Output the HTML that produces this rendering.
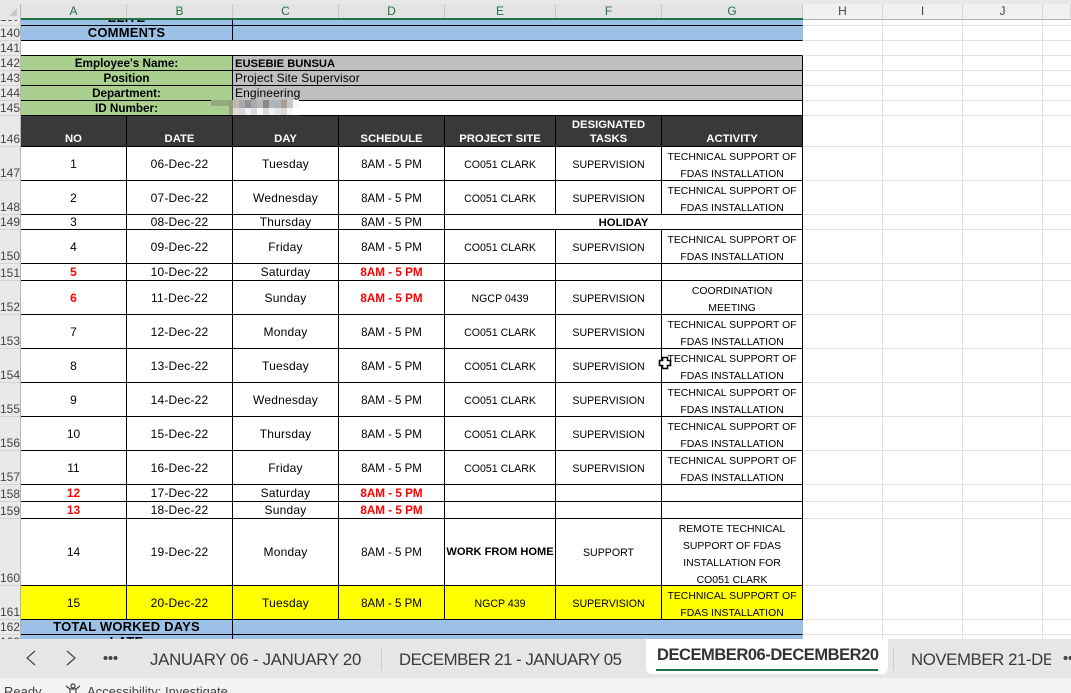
<!DOCTYPE html>
<html><head><meta charset="utf-8"><style>
html,body{margin:0;padding:0;width:1071px;height:693px;overflow:hidden;background:#fff}
body{position:relative;font-family:"Liberation Sans",sans-serif;color:#000}
table{position:absolute;left:0;top:19px;border-collapse:separate;border-spacing:0;table-layout:fixed;width:1110px}
td{padding:0;border-right:1px solid #000;border-bottom:1px solid #000;text-align:center;vertical-align:middle;font-size:12px;line-height:14px;white-space:nowrap}
td:nth-child(3),td:nth-child(4){letter-spacing:.2px}
td:nth-child(5){font-size:11.5px;line-height:12px;padding-top:2px}
td.red:nth-child(5){font-size:11.7px}
td.r{background:#e9e9e9;border-right:1px solid #b5b5b5;border-bottom:1px solid #d4d4d4;text-align:right;padding-right:3px;box-sizing:border-box;vertical-align:bottom;font-size:12px;color:#444;line-height:13px;overflow:hidden;letter-spacing:0}
td.g{border-right:1px solid #e0e0e0;border-bottom:1px solid #e0e0e0}
td.nr{border-right:1px solid transparent}
td.c{font-size:10.6px;line-height:12px;padding-top:2px;letter-spacing:0}
td.hol{font-size:11.3px;font-weight:bold;line-height:12px;padding-top:2px;letter-spacing:0}
td.wfh{font-size:11.1px;font-weight:bold;letter-spacing:0;line-height:14px;padding-top:0}
.a{font-size:10.45px;line-height:17px;margin:-2px 0 -1px;position:relative;top:3px}
.red{color:#f00;font-weight:bold}
td.blue{background:#9bc2e6;font-weight:bold;font-size:13px;letter-spacing:.2px}
td.blue.nr{border-right:1px solid #9bc2e6}
td.grn{background:#a9d08e;font-weight:bold;font-size:11.7px;letter-spacing:0;line-height:12px;padding-top:2px}
td.gry{background:#bfbfbf;text-align:left;padding-left:2px;letter-spacing:.12px}
td.eu{font-weight:bold;font-size:11.2px;letter-spacing:0;line-height:12px;padding-top:2px}
.hd td{background:#3a3838;color:#fff;font-weight:bold;vertical-align:bottom;line-height:14px;font-size:11.3px;letter-spacing:0;padding-top:0}
.y td{background:#ff0}
.y td.r{background:#e9e9e9}
.y td.g{background:#fff}
.abs{position:absolute}
.ch{position:absolute;top:4px;height:14px;line-height:15px;text-align:center;font-size:12px;color:#217346;background:#e3e3e3;border-right:1px solid #c8c8c8;box-sizing:border-box}
.ch.n{background:#f0f0f0;color:#444;border-right:1px solid #d6d6d6}
.tab{position:absolute;top:649px;font-size:16.8px;line-height:22px;color:#3a3a3a;white-space:nowrap}
</style></head><body>
<table>
<colgroup><col style="width:21px"><col style="width:106px"><col style="width:106px"><col style="width:106px"><col style="width:106px"><col style="width:111px"><col style="width:106px"><col style="width:141px"><col style="width:80px"><col style="width:80px"><col style="width:80px"><col style="width:67px"></colgroup>
<tr style="height:7px"><td class="r"><div style="height:6px;overflow:hidden"><div style="margin-top:-8px">139</div></div></td><td class="blue" colspan="2"><div style="height:6px;overflow:hidden"><div style="margin-top:-8px">ELITE</div></div></td><td class="blue nr" colspan="5"></td><td class="g"></td><td class="g"></td><td class="g"></td><td class="g"></td></tr>
<tr style="height:15px"><td class="r">140</td><td class="blue" colspan="2">COMMENTS</td><td class="blue nr" colspan="5"></td><td class="g"></td><td class="g"></td><td class="g"></td><td class="g"></td></tr>
<tr style="height:15px"><td class="r">141</td><td class="nr" colspan="7"></td><td class="g"></td><td class="g"></td><td class="g"></td><td class="g"></td></tr>
<tr style="height:15px"><td class="r">142</td><td class="grn" colspan="2">Employee's Name:</td><td class="gry eu" colspan="5">EUSEBIE BUNSUA</td><td class="g"></td><td class="g"></td><td class="g"></td><td class="g"></td></tr>
<tr style="height:15px"><td class="r">143</td><td class="grn" colspan="2">Position</td><td class="gry" colspan="5">Project Site Supervisor</td><td class="g"></td><td class="g"></td><td class="g"></td><td class="g"></td></tr>
<tr style="height:15px"><td class="r">144</td><td class="grn" colspan="2">Department:</td><td class="gry" colspan="5">Engineering</td><td class="g"></td><td class="g"></td><td class="g"></td><td class="g"></td></tr>
<tr style="height:15px"><td class="r">145</td><td class="grn" colspan="2">ID Number:</td><td colspan="5"></td><td class="g"></td><td class="g"></td><td class="g"></td><td class="g"></td></tr>
<tr style="height:31px" class="hd"><td class="r" style="background:#e9e9e9;color:#444;font-weight:normal;line-height:13px;font-size:12px">146</td><td>NO</td><td>DATE</td><td>DAY</td><td>SCHEDULE</td><td>PROJECT SITE</td><td>DESIGNATED<br>TASKS</td><td>ACTIVITY</td><td class="g" style="background:#fff"></td><td class="g" style="background:#fff"></td><td class="g" style="background:#fff"></td><td class="g" style="background:#fff"></td></tr>
<tr style="height:34px"><td class="r">147</td><td>1</td><td>06-Dec-22</td><td>Tuesday</td><td>8AM - 5 PM</td><td class="c">CO051 CLARK</td><td class="c">SUPERVISION</td><td><div class="a">TECHNICAL SUPPORT OF<br>FDAS INSTALLATION</div></td><td class="g"></td><td class="g"></td><td class="g"></td><td class="g"></td></tr>
<tr style="height:34px"><td class="r">148</td><td>2</td><td>07-Dec-22</td><td>Wednesday</td><td>8AM - 5 PM</td><td class="c">CO051 CLARK</td><td class="c">SUPERVISION</td><td><div class="a">TECHNICAL SUPPORT OF<br>FDAS INSTALLATION</div></td><td class="g"></td><td class="g"></td><td class="g"></td><td class="g"></td></tr>
<tr style="height:15px"><td class="r">149</td><td>3</td><td>08-Dec-22</td><td>Thursday</td><td>8AM - 5 PM</td><td colspan="3" class="hol">HOLIDAY</td><td class="g"></td><td class="g"></td><td class="g"></td><td class="g"></td></tr>
<tr style="height:34px"><td class="r">150</td><td>4</td><td>09-Dec-22</td><td>Friday</td><td>8AM - 5 PM</td><td class="c">CO051 CLARK</td><td class="c">SUPERVISION</td><td><div class="a">TECHNICAL SUPPORT OF<br>FDAS INSTALLATION</div></td><td class="g"></td><td class="g"></td><td class="g"></td><td class="g"></td></tr>
<tr style="height:17px"><td class="r">151</td><td class="red">5</td><td>10-Dec-22</td><td>Saturday</td><td class="red">8AM - 5 PM</td><td></td><td></td><td></td><td class="g"></td><td class="g"></td><td class="g"></td><td class="g"></td></tr>
<tr style="height:34px"><td class="r">152</td><td class="red">6</td><td>11-Dec-22</td><td>Sunday</td><td class="red">8AM - 5 PM</td><td class="c">NGCP 0439</td><td class="c">SUPERVISION</td><td><div class="a">COORDINATION<br>MEETING</div></td><td class="g"></td><td class="g"></td><td class="g"></td><td class="g"></td></tr>
<tr style="height:34px"><td class="r">153</td><td>7</td><td>12-Dec-22</td><td>Monday</td><td>8AM - 5 PM</td><td class="c">CO051 CLARK</td><td class="c">SUPERVISION</td><td><div class="a">TECHNICAL SUPPORT OF<br>FDAS INSTALLATION</div></td><td class="g"></td><td class="g"></td><td class="g"></td><td class="g"></td></tr>
<tr style="height:34px"><td class="r">154</td><td>8</td><td>13-Dec-22</td><td>Tuesday</td><td>8AM - 5 PM</td><td class="c">CO051 CLARK</td><td class="c">SUPERVISION</td><td><div class="a">TECHNICAL SUPPORT OF<br>FDAS INSTALLATION</div></td><td class="g"></td><td class="g"></td><td class="g"></td><td class="g"></td></tr>
<tr style="height:34px"><td class="r">155</td><td>9</td><td>14-Dec-22</td><td>Wednesday</td><td>8AM - 5 PM</td><td class="c">CO051 CLARK</td><td class="c">SUPERVISION</td><td><div class="a">TECHNICAL SUPPORT OF<br>FDAS INSTALLATION</div></td><td class="g"></td><td class="g"></td><td class="g"></td><td class="g"></td></tr>
<tr style="height:34px"><td class="r">156</td><td>10</td><td>15-Dec-22</td><td>Thursday</td><td>8AM - 5 PM</td><td class="c">CO051 CLARK</td><td class="c">SUPERVISION</td><td><div class="a">TECHNICAL SUPPORT OF<br>FDAS INSTALLATION</div></td><td class="g"></td><td class="g"></td><td class="g"></td><td class="g"></td></tr>
<tr style="height:34px"><td class="r">157</td><td>11</td><td>16-Dec-22</td><td>Friday</td><td>8AM - 5 PM</td><td class="c">CO051 CLARK</td><td class="c">SUPERVISION</td><td><div class="a">TECHNICAL SUPPORT OF<br>FDAS INSTALLATION</div></td><td class="g"></td><td class="g"></td><td class="g"></td><td class="g"></td></tr>
<tr style="height:17px"><td class="r">158</td><td class="red">12</td><td>17-Dec-22</td><td>Saturday</td><td class="red">8AM - 5 PM</td><td></td><td></td><td></td><td class="g"></td><td class="g"></td><td class="g"></td><td class="g"></td></tr>
<tr style="height:17px"><td class="r">159</td><td class="red">13</td><td>18-Dec-22</td><td>Sunday</td><td class="red">8AM - 5 PM</td><td></td><td></td><td></td><td class="g"></td><td class="g"></td><td class="g"></td><td class="g"></td></tr>
<tr style="height:67px"><td class="r">160</td><td>14</td><td>19-Dec-22</td><td>Monday</td><td>8AM - 5 PM</td><td class="wfh">WORK FROM HOME</td><td class="c">SUPPORT</td><td><div class="a">REMOTE TECHNICAL<br>SUPPORT OF FDAS<br>INSTALLATION FOR<br>CO051 CLARK</div></td><td class="g"></td><td class="g"></td><td class="g"></td><td class="g"></td></tr>
<tr style="height:34px" class="y"><td class="r">161</td><td>15</td><td>20-Dec-22</td><td>Tuesday</td><td>8AM - 5 PM</td><td class="c">NGCP 439</td><td class="c">SUPERVISION</td><td><div class="a">TECHNICAL SUPPORT OF<br>FDAS INSTALLATION</div></td><td class="g"></td><td class="g"></td><td class="g"></td><td class="g"></td></tr>
<tr style="height:15px"><td class="r">162</td><td class="blue" colspan="2">TOTAL WORKED DAYS</td><td class="blue nr" colspan="5"></td><td class="g"></td><td class="g"></td><td class="g"></td><td class="g"></td></tr>
<tr style="height:15px"><td class="r">163</td><td class="blue" colspan="2">LATE</td><td class="blue nr" colspan="5"></td><td class="g"></td><td class="g"></td><td class="g"></td><td class="g"></td></tr>
</table>

<!-- column headers -->
<div class="abs" style="left:0;top:0;width:1071px;height:4px;background:#e8e8e8"></div>
<div class="abs" style="left:0;top:4px;width:21px;height:16px;background:#e6e6e6;border-right:0"></div>
<svg class="abs" style="left:8px;top:7px" width="10" height="10"><path d="M9 1V9H1Z" fill="#c8c8c8"/></svg>
<div class="ch" style="left:21px;width:106px">A</div>
<div class="ch" style="left:127px;width:106px">B</div>
<div class="ch" style="left:233px;width:106px">C</div>
<div class="ch" style="left:339px;width:106px">D</div>
<div class="ch" style="left:445px;width:111px">E</div>
<div class="ch" style="left:556px;width:106px">F</div>
<div class="ch" style="left:662px;width:141px">G</div>
<div class="ch n" style="left:803px;width:80px">H</div>
<div class="ch n" style="left:883px;width:80px">I</div>
<div class="ch n" style="left:963px;width:80px">J</div>
<div class="ch n" style="left:1043px;width:28px"></div>
<div class="abs" style="left:21px;top:18px;width:782px;height:2px;background:#217346"></div>
<div class="abs" style="left:803px;top:18px;width:268px;height:2px;background:#f0f0f0;border-bottom:1px solid #b0b0b0;box-sizing:border-box"></div>
<div class="abs" style="left:20px;top:4px;width:1px;height:16px;background:#b5b5b5"></div>

<!-- blurred id -->
<div class="abs" style="left:211px;top:100px;width:22px;height:6px;background:#94ab80"></div>
<div class="abs" style="left:229px;top:100px;width:4px;height:15px;background:#8ea47d"></div>
<svg class="abs" style="left:233px;top:100px" width="66" height="16" shape-rendering="crispEdges">
<rect width="66" height="16" fill="#f4f4f4"/>
<rect width="6" height="8" fill="#c4b8b2"/><rect x="6" width="6" height="8" fill="#aaa8ac"/><rect x="12" width="6" height="8" fill="#8f8f96"/><rect x="18" width="6" height="8" fill="#a9a9ad"/><rect x="24" width="6" height="8" fill="#b4bac0"/><rect x="30" width="6" height="8" fill="#8e8682"/><rect x="36" width="6" height="8" fill="#a7b7c4"/><rect x="42" width="6" height="8" fill="#b0b3b8"/><rect x="48" width="6" height="8" fill="#a69e98"/><rect x="54" width="6" height="8" fill="#c4c8cc"/><rect x="60" width="6" height="8" fill="#f8f8f8"/>
<rect y="8" width="6" height="7" fill="#e4dad6"/><rect x="6" y="8" width="6" height="7" fill="#d8d8da"/><rect x="12" y="8" width="6" height="7" fill="#f0f0f0"/><rect x="18" y="8" width="6" height="7" fill="#dcdcdc"/><rect x="24" y="8" width="6" height="7" fill="#f6fafc"/><rect x="30" y="8" width="6" height="7" fill="#dedad6"/><rect x="36" y="8" width="6" height="7" fill="#eef2f4"/><rect x="42" y="8" width="6" height="7" fill="#e2e2e2"/><rect x="48" y="8" width="6" height="7" fill="#dcd8d2"/><rect x="54" y="8" width="6" height="7" fill="#f2f8fc"/><rect x="60" y="8" width="6" height="7" fill="#fff"/>
<rect y="15" width="66" height="1" fill="#222"/>
</svg>

<!-- cursor -->
<svg class="abs" style="left:658px;top:356px" width="15" height="15"><path d="M4.5 1.5H9.5V4.5H12.5V9.5H9.5V12.5H4.5V9.5H1.5V4.5H4.5Z" fill="#fff" stroke="#000" stroke-width="1.6"/></svg>

<!-- tab bar -->
<div class="abs" style="left:0;top:639px;width:1071px;height:39px;background:#e6e6e6"></div>
<div class="abs" style="left:0;top:678px;width:1071px;height:15px;background:#f3f3f3;overflow:hidden"></div>
<svg class="abs" style="left:24px;top:650px" width="14" height="16" fill="none" stroke="#444" stroke-width="1.2"><path d="M11 1L3 8L11 15"/></svg>
<svg class="abs" style="left:64px;top:650px" width="14" height="16" fill="none" stroke="#444" stroke-width="1.2"><path d="M3 1L11 8L3 15"/></svg>
<div class="abs" style="left:103px;top:655px;width:15px;height:6px;font-size:0">
<svg width="15" height="6" fill="#444"><circle cx="2.5" cy="3" r="2"/><circle cx="7.5" cy="3" r="2"/><circle cx="12.5" cy="3" r="2"/></svg></div>
<div class="tab" style="left:150px;letter-spacing:-.26px">JANUARY 06 - JANUARY 20</div>
<div class="abs" style="left:381px;top:647px;width:1px;height:23px;background:#ccc"></div>
<div class="tab" style="left:399px;letter-spacing:-.5px">DECEMBER 21 - JANUARY 05</div>
<div class="abs" style="left:646px;top:639px;width:242px;height:35px;background:#fff;border-radius:0 0 6px 6px"></div>
<div class="tab" style="left:657px;top:644px;font-weight:bold;letter-spacing:-.45px;font-size:16.5px;color:#333">DECEMBER06-DECEMBER20</div>
<div class="abs" style="left:656px;top:669px;width:222px;height:2px;background:#1e7145"></div>
<div class="abs" style="left:893px;top:647px;width:1px;height:23px;background:#ccc"></div>
<div class="tab" style="left:911px;width:140px;overflow:hidden;letter-spacing:-.4px">NOVEMBER 21-DECEMBER 05</div>
<svg class="abs" style="left:1063px;top:655px" width="8" height="6" fill="#444"><circle cx="2.5" cy="3" r="2"/><circle cx="7.5" cy="3" r="2"/></svg>

<!-- status bar -->
<div class="abs" style="left:0;top:678px;width:1071px;height:15px;overflow:hidden;font-size:13px;color:#444">
<div class="abs" style="left:4px;top:6px;line-height:15px">Ready</div>
<svg class="abs" style="left:65px;top:5px" width="16" height="10" fill="none" stroke="#444" stroke-width="1.2"><circle cx="8" cy="3" r="2"/><path d="M1 3L5 6H11L15 3M5 6V10M11 6V10"/></svg>
<div class="abs" style="left:87px;top:6px;line-height:15px;white-space:nowrap">Accessibility: Investigate</div>
</div>
</body></html>
